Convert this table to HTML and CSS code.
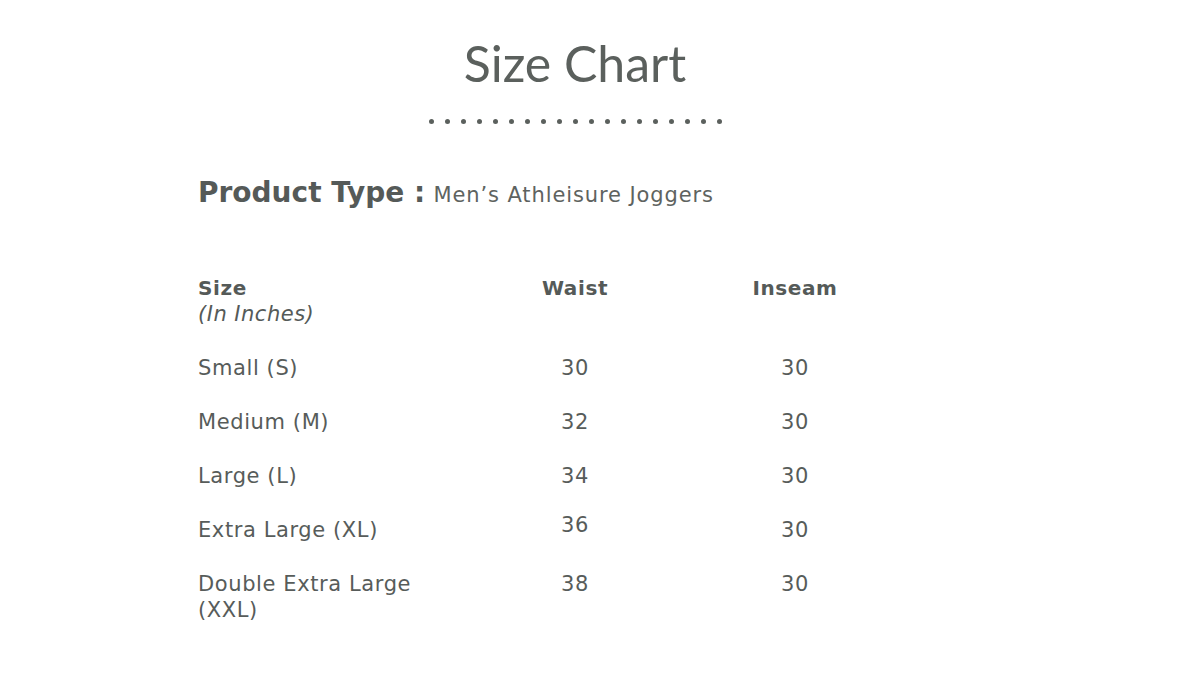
FILE: index.html
```html
<!DOCTYPE html>
<html>
<head>
<meta charset="utf-8">
<link rel="stylesheet" href="styles.css">
</head>
<body>
<div class="page">
  <header class="head">
    <h1 class="title">Size Chart</h1>
    <div class="dots"><span></span><span></span><span></span><span></span><span></span><span></span><span></span><span></span><span></span><span></span><span></span><span></span><span></span><span></span><span></span><span></span><span></span><span></span><span></span></div>
  </header>
  <section class="content">
    <p class="ptype"><span class="ptype-label">Product Type :</span> <span class="ptype-value">Men’s Athleisure Joggers</span></p>
    <div class="chart">
      <div class="cell label hdr">Size<br><em>(In Inches)</em></div>
      <div class="cell num hdr">Waist</div>
      <div class="cell num hdr">Inseam</div>

      <div class="cell label">Small (S)</div>
      <div class="cell num">30</div>
      <div class="cell num">30</div>

      <div class="cell label">Medium (M)</div>
      <div class="cell num">32</div>
      <div class="cell num">30</div>

      <div class="cell label">Large (L)</div>
      <div class="cell num">34</div>
      <div class="cell num">30</div>

      <div class="cell label">Extra Large (XL)</div>
      <div class="cell num raised">36</div>
      <div class="cell num">30</div>

      <div class="cell label">Double Extra Large<br>(XXL)</div>
      <div class="cell num">38</div>
      <div class="cell num">30</div>
    </div>
  </section>
</div>
</body>
</html>
```
FILE: styles.css
```css
html, body {
  margin: 0;
  padding: 0;
  background: #ffffff;
}
.page {
  width: 1200px;
  height: 675px;
  color: #575c5a;
  font-family: "DejaVu Sans", sans-serif;
}
.head {
  width: 1150px;
  display: flex;
  flex-direction: column;
  align-items: center;
  padding-top: 31px;
}
.title {
  margin: 0;
  font-family: "Lato", "Open Sans", sans-serif;
  font-weight: 400;
  font-size: 50px;
  line-height: 64px;
  color: #5b605d;
}
.dots {
  display: flex;
  gap: 11px;
  margin-top: 24px;
}
.dots span {
  width: 5px;
  height: 5px;
  border-radius: 50%;
  background: #5b605d;
}
.content {
  padding-left: 198px;
}
.ptype {
  margin: 53px 0 0;
  line-height: 32px;
}
.ptype-label {
  font-weight: 700;
  font-size: 28px;
  color: #555a58;
}
.ptype-value {
  margin-left: 3px;
  font-size: 21px;
  letter-spacing: 0.9px;
  color: #5e6360;
}
.chart {
  display: grid;
  grid-template-columns: 300px 154px 286px;
  row-gap: 28px;
  margin-top: 62px;
  font-size: 21px;
  line-height: 26px;
  letter-spacing: 0.6px;
}
.cell.label {
  text-align: left;
}
.cell.num {
  text-align: center;
}
.cell.hdr {
  font-weight: 700;
  font-size: 20px;
  letter-spacing: 0.6px;
  color: #555a58;
}
.cell.hdr em {
  font-weight: 400;
  font-size: 21px;
  letter-spacing: 0.5px;
  font-style: italic;
}
.cell.raised {
  margin-top: -5px;
}
```
